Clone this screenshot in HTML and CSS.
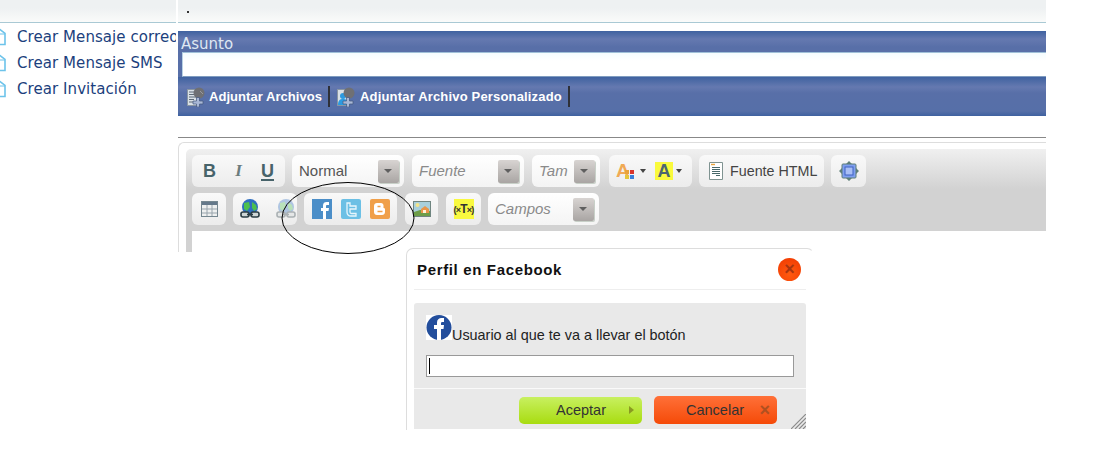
FILE: index.html
```html
<!DOCTYPE html>
<html lang="en">
<head>
  <meta charset="UTF-8">
  <meta name="viewport" content="width=device-width, initial-scale=1.0">
  <title>Perfil en Facebook</title>
  <link rel="stylesheet" href="styles.css">
</head>
<body>
  <div class="page">
    <aside class="side">
      <div class="top-strip"></div>
      <ul class="links">
        <li><svg class="doc" width="10" height="18" viewBox="0 0 10 18"><path d="M-4 1.500h8l5 4v11H-4z" fill="#fff" stroke="#6cc3ea" stroke-width="1.600"/><path d="M3 2v4h6" fill="none" stroke="#6cc3ea"/></svg>Crear Mensaje correo</li>
        <li><svg class="doc" width="10" height="18" viewBox="0 0 10 18"><path d="M-4 1.500h8l5 4v11H-4z" fill="#fff" stroke="#6cc3ea" stroke-width="1.600"/><path d="M3 2v4h6" fill="none" stroke="#6cc3ea"/></svg>Crear Mensaje SMS</li>
        <li><svg class="doc" width="10" height="18" viewBox="0 0 10 18"><path d="M-4 1.500h8l5 4v11H-4z" fill="#fff" stroke="#6cc3ea" stroke-width="1.600"/><path d="M3 2v4h6" fill="none" stroke="#6cc3ea"/></svg>Crear Invitación</li>
      </ul>
    </aside>

    <main class="main">
      <div class="top-strip"><span class="dot"></span></div>

      <section class="subject">
        <label class="subject-label">Asunto</label>
        <div class="subject-input"></div>
        <div class="attach-bar">
          <span class="attach">
            <svg width="20" height="20" viewBox="0 0 20 20"><path d="M1.500 2.500h11v16h-11z" fill="#d9e0e6" stroke="#8a96a2"/><path d="M3 5h8M3 7.500h8M3 10h8M3 12.500h5M3 15h4" stroke="#5f6b78"/><circle cx="13" cy="6" r="5.500" fill="#6f7074"/><path d="M14 4l3 3" stroke="#9a9a9e"/><path d="M7 14h3.500v-3.500h3V14H17v3h-3.500v3h-3v-3H7z" fill="#a9b8d6" stroke="#44567c" stroke-width=".7"/></svg>
            Adjuntar Archivos
          </span>
          <span class="attach attach-wide">
            <svg width="20" height="20" viewBox="0 0 20 20"><path d="M1.500 2.500h11v16h-11z" fill="#d9e0e6" stroke="#8a96a2"/><circle cx="7" cy="9" r="3" fill="#2d9ae0"/><path d="M2 18c0-5 2-6 5-6s5 1 5 6z" fill="#2d9ae0"/><circle cx="13" cy="6" r="5.500" fill="#6f7074"/><path d="M7 14h3.500v-3.500h3V14H17v3h-3.500v3h-3v-3H7z" fill="#a9b8d6" stroke="#44567c" stroke-width=".7"/></svg>
            Adjuntar Archivo Personalizado
          </span>
        </div>
      </section>

      <div class="rule"></div>

      <section class="editor">
        <div class="toolbar">
          <div class="tool-row">
            <div class="group g-format">
              <span class="fmt fmt-b">B</span>
              <span class="fmt fmt-i">I</span>
              <span class="fmt fmt-u">U</span>
            </div>
            <div class="group select s-normal"><span class="select-text plain">Normal</span><span class="arrow"></span></div>
            <div class="group select s-font"><span class="select-text">Fuente</span><span class="arrow"></span></div>
            <div class="group select s-size"><span class="select-text">Tam</span><span class="arrow"></span></div>
            <div class="group g-color">
              <span class="color-a">A<svg width="9" height="9" viewBox="0 0 9 9"><rect x="0" y="0" width="4" height="4" fill="#e9a23b"/><rect x="5" y="0" width="4" height="4" fill="#d9342b"/><rect x="0" y="5" width="4" height="4" fill="#e5c53a"/><rect x="5" y="5" width="4" height="4" fill="#3a7fd9"/></svg></span>
              <span class="caret"></span>
              <span class="color-b">A</span>
              <span class="caret"></span>
            </div>
            <div class="group g-html">
              <svg width="14" height="18" viewBox="0 0 14 18"><path d="M.5.5h13v17H.5z" fill="#fff" stroke="#7f9391"/><path d="M2 2.500h4" stroke="#e8a33c" stroke-width="1.400"/><path d="M3 5.500h8M3 7.500h8M3 9.500h8M3 11.500h8M7 13.500h4" stroke="#47686a"/></svg>
              Fuente HTML
            </div>
            <div class="group g-max">
              <svg width="20" height="20" viewBox="0 0 20 20"><path d="M10 0l3 3H7zM10 20l-3-3h6zM0 10l3-3v6zM20 10l-3 3V7z" fill="#5f7f78"/><rect x="3" y="3" width="14" height="14" rx="1" fill="#7f9ff0" stroke="#5f7f78"/><rect x="6" y="6" width="8" height="8" fill="#a9bff5" stroke="#3f62c0"/></svg>
            </div>
          </div>

          <div class="tool-row">
            <div class="group g-table">
              <svg width="17" height="16" viewBox="0 0 17 16"><rect x=".5" y=".5" width="16" height="15" fill="#eef0f0" stroke="#758790"/><path d="M1 1h15v3H1z" fill="#64788a"/><path d="M1 8h15M1 12h15M6 4v11M11 4v11" stroke="#98a4ac"/></svg>
            </div>
            <div class="group g-links">
              <svg class="globe" width="20" height="20" viewBox="0 0 20 20"><circle cx="10" cy="8" r="8" fill="#2f6fc0"/><path d="M4 4l5-1 1 5-3 4-3-2zM12 3l4 3 1 4-3 2-2-3z" fill="#4cc04e"/><rect x="1" y="13" width="8" height="5" rx="2" fill="#cfd6d6" stroke="#2a3c44" stroke-width="1.600"/><rect x="11" y="13" width="8" height="5" rx="2" fill="#cfd6d6" stroke="#2a3c44" stroke-width="1.600"/><path d="M7 15.500h6" stroke="#2a3c44" stroke-width="1.600"/></svg>
              <svg class="globe off" width="20" height="20" viewBox="0 0 20 20"><circle cx="10" cy="8" r="8" fill="#2f6fc0"/><path d="M4 4l5-1 1 5-3 4-3-2zM12 3l4 3 1 4-3 2-2-3z" fill="#4cc04e"/><rect x="1" y="13" width="8" height="5" rx="2" fill="#cfd6d6" stroke="#2a3c44" stroke-width="1.600"/><rect x="11" y="13" width="8" height="5" rx="2" fill="#cfd6d6" stroke="#2a3c44" stroke-width="1.600"/><path d="M7 15.500h6" stroke="#2a3c44" stroke-width="1.600"/></svg>
            </div>
            <div class="group g-social">
              <svg width="20" height="20" viewBox="0 0 20 20"><rect width="20" height="20" fill="#4b8ec8"/><path d="M11 20v-8H9V9h2V6.500C11 4 12.500 3 14.500 3H17v3h-1.700C14.300 6 14 6.400 14 7.200V9h3l-.5 3H14v8z" fill="#fff"/></svg>
              <svg width="20" height="20" viewBox="0 0 20 20"><rect width="20" height="20" rx="2" fill="#6cc0e5"/><path d="M6 4h3v3h6v3H9v3c0 1 .5 1.500 1.500 1.500H15v2.500h-5C7.500 17 6 15.500 6 13z" fill="none" stroke="#e8f6fc" stroke-width="1.300"/></svg>
              <svg width="20" height="20" viewBox="0 0 20 20"><rect width="20" height="20" rx="2" fill="#f0a04a"/><path d="M7 4h4c1.500 0 2.500 1 2.500 2.500V9c1 0 1.500.5 1.500 1.500v2.500c0 1.700-1.300 3-3 3H7c-1.700 0-3-1.300-3-3V7c0-1.700 1.300-3 3-3z" fill="#fff"/><path d="M7.500 7.500h3M7.500 12.500h5" stroke="#f0a04a" stroke-width="1.500"/></svg>
            </div>
            <div class="group g-image">
              <svg width="18" height="16" viewBox="0 0 18 16"><rect x=".5" y=".5" width="17" height="15" fill="#a8d0dc" stroke="#6f8580"/><circle cx="4.500" cy="4" r="2" fill="#f2e48a"/><path d="M1 11l6-2 10 1v5H1z" fill="#6d9d48"/><path d="M8 8l4-3 4 3v4H8z" fill="#e8964a"/><path d="M10 9h3v3h-3z" fill="#fff3d8"/></svg>
            </div>
            <div class="group g-field">
              <span class="field-icon">(×<b class="field-t">T</b>×)</span>
            </div>
            <div class="group select s-fields"><span class="select-text">Campos</span><span class="arrow"></span></div>
          </div>
        </div>
        <div class="editor-area"></div>
      </section>
    </main>
  </div>

  <svg class="circle-mark" width="137" height="74" viewBox="0 0 137 74"><ellipse cx="68" cy="36" rx="66" ry="35.500" fill="none" stroke="#000"/></svg>

  <div class="dialog">
    <div class="dialog-head">
      <h2 class="dialog-title">Perfil en Facebook</h2>
      <span class="dialog-close">×</span>
    </div>
    <div class="dialog-body">
      <div class="dialog-content">
        <p class="dialog-label">
          <svg width="26" height="25" viewBox="0 0 26 25"><rect width="26" height="25" fill="#fff"/><circle cx="13" cy="12.500" r="12.500" fill="#234e9c"/><path d="M11 25V14H8v-4h3V7.500C11 4.500 13 3 15.500 3H18v4h-1.500c-1.200 0-1.500.5-1.500 1.500V10h3l-.5 4H15v11z" fill="#fff"/></svg>Usuario al que te va a llevar el botón
        </p>
        <div class="dialog-input"><span class="cursor"></span></div>
      </div>
      <div class="dialog-foot">
        <div class="btn btn-ok">Aceptar<span class="btn-arrow"></span></div>
        <div class="btn btn-cancel">Cancelar<span class="btn-x">×</span></div>
      </div>
      <svg class="grip" width="15" height="15" viewBox="0 0 15 15"><path d="M0 15L15 0M4 15L15 4M8 15l7-7M12 15l3-3" stroke="#8a8a8a" stroke-width="1.200"/></svg>
    </div>
  </div>
</body>
</html>
```

FILE: styles.css
```css
* {
  padding: 0;
  margin: 0;
  box-sizing: border-box;
}
html, body {
  height: 450px;
  overflow: hidden;
  background-color: #fff;
}
body {
  position: relative;
  font-family: "Liberation Sans", Arial, sans-serif;
}
.page {
  display: flex;
  width: 1046px;
  height: 252px;
  overflow: hidden;
}
.top-strip {
  height: 23px;
  padding: 11px 0 0 9px;
  border-bottom: 1px solid #a9c9d4;
  background: linear-gradient(#eef1f2 0, #eef1f2 8px, #fafbfa 22px);
}

/* left menu */
.side {
  width: 176px;
  margin-right: 2px;
  flex: none;
  overflow: hidden;
}
.links {
  list-style: none;
  padding-top: 1px;
}
.links li {
  display: flex;
  align-items: center;
  height: 26px;
  font-family: "DejaVu Sans", Verdana, sans-serif;
  font-size: 15px;
  letter-spacing: .07px;
  color: #1c3f7d;
  white-space: nowrap;
}
.doc {
  flex: none;
  margin-left: -4px;
  margin-right: 11px;
}

/* subject panel */
.main {
  width: 868px;
  flex: none;
}
.dot {
  display: block;
  width: 2px;
  height: 2px;
  background-color: #333;
}
.subject {
  margin-top: 8px;
  height: 85px;
  background: linear-gradient(#3f62a0 0, #6579b0 8px, #586fa8 16px, #566fa8 100%);
}
.subject-label {
  display: block;
  height: 21px;
  padding: 4px 0 0 3px;
  font-family: "DejaVu Sans", Verdana, sans-serif;
  font-size: 15px;
  line-height: 18px;
  color: #dfe7f2;
}
.subject-input {
  height: 25px;
  margin-left: 4px;
  background: linear-gradient(#f4fcff, #fff 8px);
  border-top: 1px solid #9fc0d8;
  border-bottom: 1px solid #7f9cc0;
  border-left: 1px solid #b9d2e4;
}
.attach-bar {
  display: flex;
  align-items: center;
  height: 39px;
  padding: 0 0 0 8px;
  background: linear-gradient(#3f62a0 0, #6579b0 10px, #586fa8 16px, #566fa8 34px, #3f62a0 39px);
}
.attach {
  display: flex;
  align-items: center;
  gap: 3px;
  height: 21px;
  padding-right: 6px;
  margin-right: 6px;
  border-right: 2px solid #2e3038;
  font-size: 13px;
  font-weight: 700;
  letter-spacing: .05px;
  color: #fff;
  white-space: nowrap;
}
.attach-wide {
  gap: 4px;
  letter-spacing: .17px;
}
.attach svg {
  flex: none;
}
.rule {
  height: 1px;
  margin-top: 21px;
  background-color: #888;
}

/* editor */
.editor {
  height: 120px;
  margin-top: 4px;
  padding: 6px 0 0 7px;
  border: 1px solid #ddd;
  border-right: 0;
  border-bottom: 0;
  border-radius: 6px 0 0 0;
}
.toolbar {
  height: 82px;
  padding: 6px 0 0 6px;
  border-radius: 5px 0 0 0;
  background: linear-gradient(#f0f0f0 0, #d2d2d2 40px);
}
.tool-row {
  display: flex;
  gap: 7px;
  height: 32px;
  margin-bottom: 6px;
}
.group {
  display: flex;
  align-items: center;
  flex: none;
  height: 32px;
  border-radius: 6px;
  background: linear-gradient(#f9f9f9, #ececec);
}
.g-format {
  width: 93px;
  justify-content: space-around;
  padding: 0 3px;
}
.fmt {
  width: 20px;
  text-align: center;
  font-size: 18px;
  font-weight: 700;
  color: #47636a;
}
.fmt-i {
  font-style: italic;
  font-size: 17px;
  font-family: "Liberation Serif", serif;
  color: #6a7c7e;
}
.fmt-u {
  text-decoration: underline;
  text-decoration-thickness: 2px;
  text-underline-offset: 2px;
}
.select {
  justify-content: space-between;
  padding: 0 5px 0 7px;
  background: linear-gradient(#fff, #f4f4f4);
}
.s-normal { width: 112px; }
.s-font { width: 112px; margin-left: 1px; }
.s-size { width: 68px; margin-left: 1px; }
.s-fields { width: 111px; }
.select-text {
  padding-bottom: 2px;
  font-size: 15px;
  font-style: italic;
  color: #8a8a8a;
}
.select-text.plain {
  font-style: normal;
  color: #555;
}
.arrow {
  position: relative;
  display: block;
  width: 21px;
  height: 23px;
  border-radius: 2px;
  background: linear-gradient(#d8d4d2, #a9a5a3);
  box-shadow: 1px 1px 0 #c8d0c8;
}
.arrow::after {
  content: "";
  position: absolute;
  left: 6px;
  top: 9px;
  border: 4px solid transparent;
  border-top: 4px solid #5f5f5f;
  border-bottom: 0;
}
.g-color {
  width: 83px;
  margin-left: 2px;
  padding-left: 7px;
}
.color-a {
  position: relative;
  width: 21px;
  font-size: 19px;
  font-weight: 700;
  line-height: 20px;
  color: #f0aa55;
}
.color-a svg {
  position: absolute;
  left: 9px;
  top: 9px;
}
.color-b {
  width: 18px;
  height: 18px;
  margin-left: 9px;
  background-color: #fafa3c;
  text-align: center;
  font-size: 18px;
  font-weight: 700;
  line-height: 18px;
  color: #4c6670;
}
.caret {
  margin-left: 3px;
  border: 3px solid transparent;
  border-top: 4px solid #444;
  border-bottom: 0;
}
.g-html {
  width: 125px;
  gap: 7px;
  padding-left: 10px;
  font-size: 14.300px;
  color: #444;
}
.g-max {
  width: 35px;
  justify-content: center;
}
.g-table {
  width: 34px;
  justify-content: center;
}
.g-links {
  width: 64px;
  justify-content: space-between;
  padding: 0 1px 0 7px;
}
.globe.off {
  opacity: .35;
}
.g-social {
  width: 93px;
  gap: 9px;
  padding-left: 8px;
}
.g-image {
  width: 33px;
  margin-left: 1px;
  justify-content: center;
}
.g-field {
  width: 35px;
  margin-left: 1px;
  justify-content: center;
}
.field-icon {
  width: 20px;
  height: 20px;
  background-color: #f9f940;
  text-align: center;
  font-size: 9px;
  font-weight: 700;
  letter-spacing: -.8px;
  line-height: 20px;
  color: #333;
  white-space: nowrap;
}
.field-t {
  font-size: 12px;
}
.editor-area {
  height: 40px;
  border-left: 6px solid #d2d2d2;
  background-color: #fff;
}

/* overlays */
.circle-mark {
  position: absolute;
  left: 280px;
  top: 182px;
}
.dialog {
  position: absolute;
  left: 406px;
  top: 248px;
  width: 408px;
  height: 182px;
  padding: 0 7px 0 7px;
  border: 1px solid #ddd;
  border-right-color: transparent;
  border-bottom: 0;
  border-radius: 7px 7px 0 0;
  background-color: #fff;
}
.dialog-head {
  display: flex;
  align-items: center;
  justify-content: space-between;
  height: 41px;
  padding: 0 5px 0 3px;
  border-bottom: 1px solid #eee;
}
.dialog-title {
  font-size: 15px;
  font-weight: 700;
  letter-spacing: .65px;
  color: #111;
}
.dialog-close {
  width: 23px;
  height: 23px;
  border-radius: 50%;
  background: radial-gradient(circle at 50% 70%, #ff5a10, #f03800);
  text-align: center;
  font-size: 18px;
  font-weight: 700;
  line-height: 22px;
  color: #a83410;
}
.dialog-body {
  position: relative;
  height: 126px;
  margin-top: 13px;
  background-color: #e9e9e9;
  border-radius: 3px 3px 0 0;
}
.dialog-content {
  height: 86px;
  padding: 12px 12px 0;
  border-bottom: 1px solid #fafafa;
}
.dialog-label {
  display: flex;
  align-items: flex-end;
  height: 28px;
  font-size: 14.400px;
  line-height: 16px;
  color: #222;
}
.dialog-label svg {
  align-self: flex-start;
}
.dialog-input {
  height: 22px;
  margin-top: 12px;
  padding: 2px;
  background-color: #fff;
  border: 1px solid #999;
}
.cursor {
  display: block;
  width: 1px;
  height: 16px;
  background-color: #000;
}
.dialog-foot {
  display: flex;
  justify-content: flex-end;
  gap: 12px;
  padding: 7px 29px 0 0;
}
.btn {
  position: relative;
  width: 123px;
  height: 28px;
  border-radius: 5px;
  padding-left: 37px;
  font-size: 14.500px;
  line-height: 28px;
  color: #333;
}
.btn-ok {
  height: 27px;
  margin-top: 1px;
  line-height: 26px;
  background: linear-gradient(#c8f060, #a8dc10);
}
.btn-cancel {
  padding-left: 32px;
  background: linear-gradient(#ff7038, #f54a08);
}
.btn-arrow {
  position: absolute;
  right: 8px;
  top: 9px;
  border: 4px solid transparent;
  border-left: 5px solid #8a9a20;
  border-right: 0;
}
.btn-x {
  position: absolute;
  right: 7px;
  top: 0;
  font-size: 18px;
  font-weight: 700;
  color: #b05020;
}
.grip {
  position: absolute;
  right: 0;
  bottom: 0;
}
```
